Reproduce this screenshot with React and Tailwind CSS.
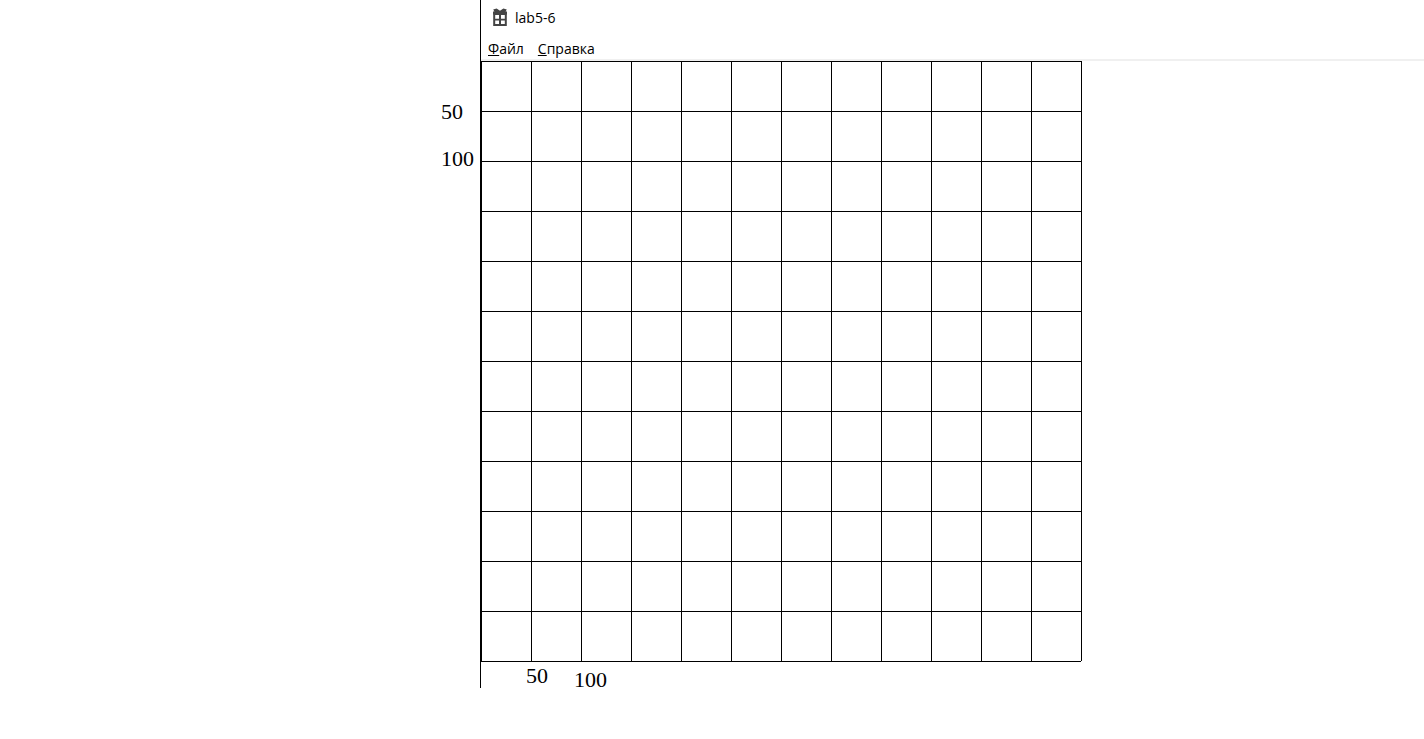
const CELL = 50;
const COUNT = 12;
const SIZE = CELL * COUNT;
const LINES = Array.from({ length: COUNT + 1 }, (_, i) => i * CELL);

function AppIcon() {
  return (
    <svg className="h-5 w-4 shrink-0" viewBox="0 0 16 20" aria-hidden="true">
      <path
        fill="#444444"
        fillRule="evenodd"
        d="M1.2 1.6 4.6 0.6 8 2.8 11.4 0.6 14.8 1.6 13.6 3.6H15V6.6H14.8V18H1.2V6.6H1V3.6H2.4ZM3.2 7V10.8H7V7ZM9 7V10.8H12.8V7ZM3.2 12.4V16.1H7V12.4ZM9 12.4V16.1H12.8V12.4Z"
      />
    </svg>
  );
}

function TitleBar() {
  return (
    <header className="flex h-9 items-center gap-[7px] pl-[11px]">
      <AppIcon />
      <h1 className="text-[14px] leading-5">lab5-6</h1>
    </header>
  );
}

function MenuBar() {
  return (
    <nav className="flex h-[25px] items-end gap-[14px] border-b-2 border-[#f0f0f0] pl-[7px] text-[14px] leading-5">
      <button type="button">
        <span className="underline underline-offset-1">Ф</span>айл
      </button>
      <button type="button">
        <span className="underline underline-offset-1">С</span>правка
      </button>
    </nav>
  );
}

function Grid() {
  return (
    <svg
      className="block h-[601px] w-[601px]"
      viewBox="0 0 601 601"
      shapeRendering="crispEdges"
      role="img"
      aria-label="Координатная сетка"
    >
      {LINES.map((p) => (
        <g key={p} fill="#000000">
          <rect x={p} y="0" width="1" height={SIZE} />
          <rect x="0" y={p} width={SIZE} height="1" />
        </g>
      ))}
    </svg>
  );
}

export default function App() {
  return (
    <main className="flex min-h-screen items-start bg-white font-['Open_Sans','Noto_Sans',sans-serif] text-black">
      <aside className="flex w-[480px] shrink-0 justify-end pt-[100px] font-['Liberation_Serif',serif] text-[22px] leading-6">
        <div className="flex w-[39px] flex-col gap-[23px]">
          <span>50</span>
          <span>100</span>
        </div>
      </aside>
      <section className="min-w-0 grow border-l border-black">
        <TitleBar />
        <MenuBar />
        <Grid />
        <div className="flex h-[26px] items-start gap-[26px] pt-[2px] pl-[45px] font-['Liberation_Serif',serif] text-[22px] leading-6">
          <span>50</span>
          <span className="pt-1">100</span>
        </div>
      </section>
    </main>
  );
}
